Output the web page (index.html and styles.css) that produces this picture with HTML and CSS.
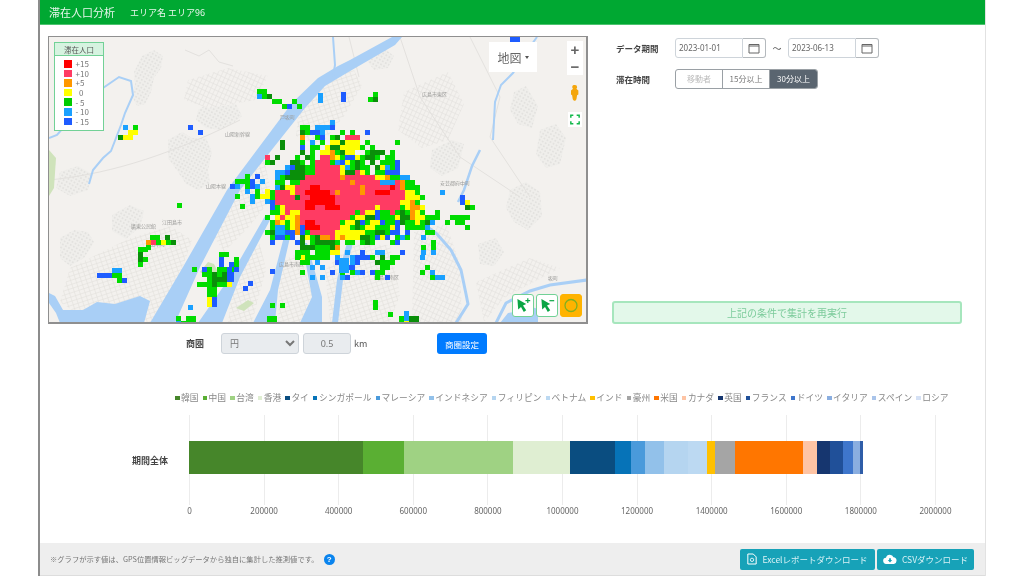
FILE: index.html
```html
<!DOCTYPE html>
<html lang="ja">
<head>
<meta charset="utf-8">
<title>滞在人口分析</title>
<link rel="stylesheet" href="styles.css">
</head>
<body>
<div class="page">
  <header class="header"><span class="title">滞在人口分析</span><span class="area">エリア名 エリア96</span></header>
  <main class="main">
    <div class="top">
      <section class="left">
        <div class="map">
          <svg class="basemap" viewBox="49 37 537 285" preserveAspectRatio="none" aria-hidden="true">
            <defs>
              <pattern id="streets" width="5" height="4" patternUnits="userSpaceOnUse" patternTransform="rotate(-18)">
                <rect width="5" height="4" fill="#f3f1ee"/>
                <path d="M0 .5H5M.5 0V4" stroke="#e2e0dc" stroke-width=".6"/>
              </pattern>
              <pattern id="streets2" width="4" height="5" patternUnits="userSpaceOnUse" patternTransform="rotate(25)">
                <rect width="4" height="5" fill="#f3f1ee"/>
                <path d="M0 .5H4M.5 0V5" stroke="#e3e1dd" stroke-width=".6"/>
              </pattern>
              <pattern id="hill" width="3.500" height="3.500" patternUnits="userSpaceOnUse" patternTransform="rotate(30)">
                <rect width="3.500" height="3.500" fill="#efeeeb"/>
                <circle cx="1.700" cy="1.700" r=".9" fill="#e0dfdc"/>
              </pattern>
            </defs>
            <rect x="49" y="37" width="537" height="285" fill="#f3f1ee"/>
            <g fill="url(#hill)">
              <path d="M134 72l8-16 12-6 9 6-2 12-7 10-3 14-6 12-8 2-5-10 3-12z"/>
              <path d="M168 140l14-8 10 6 14 0 6 14-4 18 2 14-12 6-12-6-8-12-10-14z"/>
              <path d="M198 110l12-8 14 4 12-2 6 12-10 8-12 6-14-2-10-8z"/>
              <path d="M60 172l18-6 14 8-4 16-18 6-14-8z"/>
              <path d="M60 238l14-8 14 2 6 10-10 16-14 8-10-8z"/>
              <path d="M112 215l18-10 14 6-4 16-14 12-14-8z"/>
              <path d="M432 150l20-10 12 4-6 24-16 8-12-8z"/>
              <path d="M510 190l16-8 14 10 2 24-14 14-14-8-8-14z"/>
              <path d="M514 92l12-6 12 20-6 22-14-4-8-14z"/>
              <path d="M478 244l18-6 8 14-10 14-14-2z"/>
              <path d="M540 130l16-6 10 14-6 26-14 4-10-14z"/>
              <path d="M372 52l12-4 10 8-6 12-14 2-6-8z"/>
            </g>
            <g fill="url(#streets)">
              <path d="M300 100l30-24 24-6 8 16-18 30-24 30-24-10z"/>
              <path d="M70 268l60-30 40-12 22 14-28 82H90l-30-20z"/>
              <path d="M240 180l24-22 8 40-24 30-24 24-12-18z"/>
              <path d="M236 262l24-18 6 26-14 52h-24z"/>
              <path d="M280 262l20-10 14 50 0 20h-36z"/>
              <path d="M325 270l25-25 40 0 10 50-10 27h-60z"/>
            </g>
            <g fill="url(#streets2)">
              <path d="M404 92l44-20 16 32-16 36-26 8-24-18z"/>
              <path d="M414 232l32-8 14 40 2 58h-50z"/>
              <path d="M476 282l54-24 30 10-56 30-20 24z"/>
              <path d="M188 80l40-12 40 8-12 24-48 8-24-8z"/>
            </g>
            <g fill="none" stroke="#e3e1de" stroke-width="1">
              <path d="M49 180C100 175 160 160 240 120"/>
              <path d="M185 50l14 6 10-6 10 12 14 4"/>
              <path d="M349 37l10 40M400 37l20 60 40 60 60 40"/>
              <path d="M470 37l30 60-10 40 40 60"/>
            </g>
            <path d="M208 262l6 2 4 8-12 4-6-4z" fill="#cfe3bb"/>
            <path d="M49 150l7 8-2 30-5 8z" fill="#cfe3bb"/>
            <path d="M236 308l12-8 6 3-10 8z" fill="#cfe3bb"/>
            <g fill="#a9cff6">
              <path d="M338 66L318 78 292 103 227 190 183 267 150 323H175L200 267 240 190 305 108 325 86 345 74 395 45 402 37H392L350 60z"/>
              <path d="M265 216L270 220 240 277 222 323H198L230 277z"/>
              <path d="M285 233H291L278 290 275 323H253L270 290z"/>
              <path d="M302 243H307L322 297 322 323H300L312 297z"/>
              <path d="M49 293l6 3 8 14 20 0 14-8 18 2 25-8 10 5-6 22H60l-4-10-7-10z"/>
              <path d="M500 323l8-10 12-2 6-6 12 4 0 14z"/>
            </g>
            <g fill="none" stroke="#a9cff6">
              <path stroke-width="2" d="M103 88l16-11 12 4 2 14-8 18-4 12-10 26-8 7-10 12-4 14"/>
              <path stroke-width="2" d="M49 138l8-3 6-7"/>
              <path stroke-width="2" d="M333 37l2 28-2 12"/>
              <path stroke-width="2" d="M537 37l-10 14-14 22-12 12-6 17-2 38"/>
              <path stroke-width="2.500" d="M480 150l-8 16-8 24-6 12"/>
              <path stroke-width="3" d="M421 222l16 12 14 16 10 20 5 24 2 10-12 19"/>
              <path stroke-width="3" d="M587 280l-37 5-20 6-24 12-10 20"/>
              <path stroke-width="6" d="M350 243l-10 37-5 43"/>
            </g>
            <g class="maplabel">
              <text x="131" y="228">廣東公民館</text>
              <text x="162" y="224">江田島市</text>
              <text x="150" y="246">山本町</text>
              <text x="225" y="136">山陽新幹線</text>
              <text x="280" y="119">戸坂町</text>
              <text x="422" y="96">広島市東区</text>
              <text x="206" y="188">山陽本線</text>
              <text x="440" y="185">安芸郡府中町</text>
              <text x="279" y="266">広島市南区</text>
              <text x="374" y="279">広島市南区</text>
              <text x="548" y="280">坂町</text>
              <text x="372" y="178">広島駅</text>
            </g>
            <g id="heat" shape-rendering="crispEdges"></g>
          </svg>
          <div class="legend">
            <div class="legend-head">滞在人口</div>
            <ul class="legend-list">
              <li><i class="sw s1"></i>+15</li>
              <li><i class="sw s2"></i>+10</li>
              <li><i class="sw s3"></i>+5</li>
              <li><i class="sw s4"></i>&nbsp;&nbsp;0</li>
              <li><i class="sw s5"></i>- 5</li>
              <li><i class="sw s6"></i>- 10</li>
              <li><i class="sw s7"></i>- 15</li>
            </ul>
          </div>
          <div class="maptype">地図<span class="caret"></span></div>
          <div class="zoomctl"><span>+</span><span>−</span></div>
          <svg class="pegman" viewBox="0 0 12 20" aria-hidden="true"><path fill="#f4a60c" d="M6 0a2.600 2.600 0 0 1 2.600 2.800c0 1-.4 1.600-1 2l2.600 2v5l-1.600 1-.8 5-1.400 2-1-.2-1-.2-1.200-1.600-.8-5-1.400-1V6.800l2.600-2c-.6-.4-1-1-1-2A2.600 2.600 0 0 1 6 0z"/></svg>
          <div class="fullscreen"><svg viewBox="0 0 12 12" aria-hidden="true"><path fill="none" stroke="#12b84a" stroke-width="1.800" d="M1 4V1h3M8 1h3v3M11 8v3H8M4 11H1V8"/></svg></div>
          <div class="tools">
            <button class="tool" type="button" aria-label="追加"><svg viewBox="0 0 20 20"><path fill="#0aa544" d="M3 2l11 6-4 2 4 6-3 2-3.500-6L4 15z"/><path stroke="#0aa544" stroke-width="1.500" d="M13 4h6M16 1v6"/></svg></button>
            <button class="tool" type="button" aria-label="削除"><svg viewBox="0 0 20 20"><path fill="#0aa544" d="M3 2l11 6-4 2 4 6-3 2-3.500-6L4 15z"/><path stroke="#0aa544" stroke-width="1.500" d="M13 4h6"/></svg></button>
            <button class="tool tool-on" type="button" aria-label="円"><svg viewBox="0 0 20 20"><circle cx="10" cy="10" r="7.500" fill="none" stroke="#7fb020" stroke-width="1.600"/></svg></button>
          </div>
        </div>
        <div class="area-row">
          <label class="b-label area-label">商圏</label>
          <select class="area-select"><option>円</option></select>
          <input class="area-input" value="0.5" disabled>
          <span class="unit">km</span>
          <button class="btn-primary" type="button">商圏設定</button>
        </div>
      </section>
      <section class="right">
        <div class="field">
          <span class="b-label">データ期間</span>
          <div class="date"><span class="date-val">2023-01-01</span><span class="cal"><svg viewBox="0 0 12 12"><path fill="none" stroke="#666" d="M1 2.500h10v8.500H1zM1 4h10"/></svg></span></div>
          <span class="tilde">〜</span>
          <div class="date"><span class="date-val">2023-06-13</span><span class="cal"><svg viewBox="0 0 12 12"><path fill="none" stroke="#666" d="M1 2.500h10v8.500H1zM1 4h10"/></svg></span></div>
        </div>
        <div class="field">
          <span class="b-label">滞在時間</span>
          <div class="seg">
            <span class="seg-item seg-muted">移動者</span>
            <span class="seg-item">15分以上</span>
            <span class="seg-item seg-on">30分以上</span>
          </div>
        </div>
        <button class="run" type="button">上記の条件で集計を再実行</button>
      </section>
    </div>
    <section class="chart">
      <ul class="chart-legend">
        <li><i class="c1"></i>韓国</li><li><i class="c2"></i>中国</li><li><i class="c3"></i>台湾</li><li><i class="c4"></i>香港</li><li><i class="c5"></i>タイ</li><li><i class="c6"></i>シンガポール</li><li><i class="c7"></i>マレーシア</li><li><i class="c8"></i>インドネシア</li><li><i class="c9"></i>フィリピン</li><li><i class="c10"></i>ベトナム</li><li><i class="c11"></i>インド</li><li><i class="c12"></i>豪州</li><li><i class="c13"></i>米国</li><li><i class="c14"></i>カナダ</li><li><i class="c15"></i>英国</li><li><i class="c16"></i>フランス</li><li><i class="c17"></i>ドイツ</li><li><i class="c18"></i>イタリア</li><li><i class="c19"></i>スペイン</li><li><i class="c20"></i>ロシア</li>
      </ul>
      <div class="plot-row">
        <span class="b-label row-label">期間全体</span>
        <div class="plot">
          <div class="gridlines"><i></i><i></i><i></i><i></i><i></i><i></i><i></i><i></i><i></i><i></i><i></i></div>
          <div class="bar">
            <span class="c1" style="width:174px"></span><span class="c2" style="width:41px"></span><span class="c3" style="width:109px"></span><span class="c4" style="width:57px"></span><span class="c5" style="width:45px"></span><span class="c6" style="width:16px"></span><span class="c7" style="width:14px"></span><span class="c8" style="width:19px"></span><span class="c9" style="width:24px"></span><span class="c10" style="width:19px"></span><span class="c11" style="width:8px"></span><span class="c12" style="width:20px"></span><span class="c13" style="width:68px"></span><span class="c14" style="width:14px"></span><span class="c15" style="width:13px"></span><span class="c16" style="width:13px"></span><span class="c17" style="width:10px"></span><span class="c18" style="width:7px"></span><span class="c21" style="width:3px"></span>
          </div>
        </div>
      </div>
      <div class="ticks"><span>0</span><span>200000</span><span>400000</span><span>600000</span><span>800000</span><span>1000000</span><span>1200000</span><span>1400000</span><span>1600000</span><span>1800000</span><span>2000000</span></div>
    </section>
    <footer class="footer">
      <p class="note">※グラフが示す値は、GPS位置情報ビッグデータから独自に集計した推測値です。<span class="help">?</span></p>
      <div class="actions">
        <button class="btn-info btn-excel" type="button"><svg viewBox="0 0 12 14"><path fill="none" stroke="#fff" stroke-width="1.200" d="M1 1h6.500L11 4.500V13H1z"/><circle cx="6" cy="8" r="2" fill="none" stroke="#fff"/></svg>Excelレポートダウンロード</button>
        <button class="btn-info btn-csv" type="button"><svg viewBox="0 0 16 12"><path fill="#fff" d="M4 11a3.500 3.500 0 0 1-.6-7A4.500 4.500 0 0 1 12 3.500 3.800 3.800 0 0 1 12.500 11z"/><path fill="#17a2b8" d="M8 9.500L5.500 6.500H7V4.500h2v2h1.500z"/></svg>CSVダウンロード</button>
      </div>
    </footer>
  </main>
</div>
<script src="heatmap.js"></script>
</body>
</html>
```
FILE: styles.css
```css
* { box-sizing: border-box; }
html, body { margin: 0; padding: 0; background: #fff; }
body {
  width: 1024px;
  height: 576px;
  overflow: hidden;
  font-family: "Noto Sans CJK JP", "Noto Sans", "Liberation Sans", sans-serif;
  color: #444;
}
.page {
  margin-left: 38px;
  width: 948px;
  height: 576px;
  display: flex;
  flex-direction: column;
  background: #fff;
  border-left: 2px solid #8c8c8c;
  border-right: 1px solid #e2e2e2;
  filter: blur(.5px);
}
.header {
  height: 25px;
  flex: none;
  background: #00a832;
  border-bottom: 1px solid #4cc36f;
  color: #e8f6ec;
  display: flex;
  align-items: center;
  padding-left: 9px;
}
.title { font-size: 11px; margin-right: 15px; }
.area { font-size: 9px; }
.main { flex: 1; display: flex; flex-direction: column; min-height: 0; }
.top { display: flex; padding: 11px 0 0 8px; }
.left { width: 540px; flex: none; }
.map {
  position: relative;
  height: 288px;
  border: 1px solid #8f8f8f;
  border-width: 1px 2px 2px 1px;
  overflow: hidden;
  background: #f3f1ee;
}
.basemap { position: absolute; inset: 0; width: 100%; height: 100%; display: block; }
.maplabel { font-size: 5px; fill: #9a9a98; }
.legend {
  position: absolute;
  left: 5px;
  top: 5px;
  width: 50px;
  height: 89px;
  background: #fff;
  border: 1px solid #72d196;
}
.legend-head {
  height: 13px;
  background: #d6f3e0;
  font-size: 7.500px;
  line-height: 13px;
  text-align: center;
  color: #555;
  border-bottom: 1px solid #72d196;
}
.legend-list {
  list-style: none;
  margin: 0;
  padding: 3px 0 0 9px;
  font-size: 8px;
  color: #777;
}
.legend-list li { height: 9.600px; display: flex; align-items: center; gap: 4px; line-height: 9px; }
.sw { width: 7.500px; height: 7.500px; display: block; }
.s1 { background: #ff0000; }
.s2 { background: #ff3b63; }
.s3 { background: #ff9800; }
.s4 { background: #ffff00; }
.s5 { background: #00cc00; }
.s6 { background: #1aa0ff; }
.s7 { background: #1e5cff; }
.maptype {
  position: absolute;
  right: 49px;
  top: 5px;
  width: 48px;
  height: 30px;
  background: #fff;
  font-size: 12px;
  color: #666;
  display: flex;
  align-items: center;
  justify-content: center;
  gap: 3px;
}
.caret { width: 0; height: 0; border: 2.500px solid transparent; border-top: 3px solid #555; border-bottom: 0; }
.zoomctl {
  position: absolute;
  right: 3px;
  top: 4px;
  width: 16px;
  height: 34px;
  display: flex;
  flex-direction: column;
  align-items: center;
  color: #666;
  font-size: 15px;
  font-weight: 700;
  line-height: 17px;
  background: #fff;
  font-family: "Liberation Sans", sans-serif;
}
.zoomctl span { height: 17px; }
.pegman { position: absolute; right: 6px; top: 48px; width: 10px; height: 16px; }
.fullscreen {
  position: absolute;
  right: 4px;
  top: 75px;
  width: 14px;
  height: 15px;
  background: #fff;
  padding: 2px;
  display: flex;
}
.fullscreen svg { width: 100%; height: 100%; }
.tools { position: absolute; right: 4px; bottom: 5px; display: flex; gap: 2px; }
.tool {
  width: 22px;
  height: 23px;
  padding: 2px;
  background: #fff;
  border: 1.500px solid #72d196;
  border-radius: 3px;
  display: flex;
}
.tool svg { width: 100%; height: 100%; }
.tool-on { background: #ffb300; border-color: #ffb300; }
.area-row { display: flex; align-items: center; margin-top: 9px; height: 21px; padding-left: 138px; }
.b-label { font-size: 9px; font-weight: 700; color: #444; }
.area-label { width: 35px; }
.area-select {
  width: 78px;
  height: 21px;
  background: #e9ecef;
  border: 1px solid #ced4da;
  border-radius: 3px;
  font: 9px "Noto Sans CJK JP", sans-serif;
  color: #777;
  padding-left: 4px;
}
.area-input {
  width: 48px;
  height: 21px;
  margin-left: 4px;
  background: #e9ecef;
  border: 1px solid #ced4da;
  border-radius: 3px;
  text-align: center;
  font: 9px "Noto Sans", sans-serif;
  color: #777;
}
.unit { font-size: 9px; color: #555; margin-left: 3px; width: 83px; }
.btn-primary {
  width: 50px;
  height: 21px;
  background: #007bff;
  color: #fff;
  border: 0;
  border-radius: 3px;
  padding: 0;
  font: 8.500px "Noto Sans CJK JP", sans-serif;
}
.right { margin-left: 24px; width: 350px; display: flex; flex-direction: column; height: 288px; }
.field { display: flex; align-items: center; height: 20px; margin-left: 4px; margin-top: 2px; }
.field + .field { margin-top: 11px; }
.field .b-label { width: 59px; font-size: 8.500px; }
.date { display: flex; height: 20px; width: 91px; }
.date-val {
  width: 68px;
  border: 1px solid #ced4da;
  border-radius: 3px 0 0 3px;
  font: 8px/18px "Noto Sans", sans-serif;
  color: #666;
  padding-left: 3px;
}
.cal {
  width: 23px;
  border: 1px solid #b4b9bd;
  border-radius: 0 3px 3px 0;
  border-left: 0;
  display: flex;
  align-items: center;
  justify-content: center;
}
.cal svg { width: 12px; height: 12px; }
.tilde { width: 22px; text-align: center; font-size: 9px; color: #555; }
.seg { display: flex; height: 20px; border: 1px solid #9aa0a5; border-radius: 3px; overflow: hidden; }
.seg-item {
  width: 47px;
  font-size: 8px;
  line-height: 18px;
  text-align: center;
  color: #777;
  border-right: 1px solid #9aa0a5;
}
.seg-muted { color: #bbb; }
.seg-on { background: #5a6570; color: #fff; border-right: 0; }
.run {
  margin-top: auto;
  height: 23px;
  background: #e3f8ea;
  border: 2px solid #a6e6bd;
  border-radius: 3px;
  color: #7ccb9b;
  font: 10px "Noto Sans CJK JP", sans-serif;
  padding: 0;
}
.chart { margin-top: 38px; }
.chart-legend {
  list-style: none;
  margin: 0 0 0 135px;
  padding: 0;
  height: 12px;
  display: flex;
  gap: 4.100px;
  font-size: 8.750px;
  line-height: 12px;
  color: #888;
  white-space: nowrap;
}
.chart-legend li { display: flex; align-items: center; gap: 1.500px; }
.chart-legend i { display: block; width: 4.500px; height: 4.500px; }
.plot-row { display: flex; align-items: center; margin-top: 11px; padding-left: 92px; }
.row-label { width: 57px; }
.plot { position: relative; width: 747px; height: 90px; }
.gridlines { position: absolute; inset: 0; display: flex; justify-content: space-between; }
.gridlines i { display: block; width: 1px; background: #ececec; }
.bar { position: absolute; left: 0; top: 26px; height: 33px; display: flex; }
.bar span { display: block; height: 100%; }
.ticks {
  display: flex;
  justify-content: space-between;
  margin: 1px 0 0 149px;
  width: 747px;
  font: 8px/10px "Noto Sans", sans-serif;
  color: #666;
}
.ticks span { width: 1px; display: flex; justify-content: center; white-space: nowrap; }
.c1 { background: #46862a; }
.c2 { background: #5aaf33; }
.c3 { background: #9fd283; }
.c4 { background: #dfeed2; }
.c5 { background: #0a4d80; }
.c6 { background: #0673b8; }
.c7 { background: #4a9adb; }
.c8 { background: #92c1ea; }
.c9 { background: #b5d5f0; }
.c10 { background: #bcd9f2; }
.c11 { background: #ffc000; }
.c12 { background: #a5a5a5; }
.c13 { background: #ff7600; }
.c14 { background: #fec4a4; }
.c15 { background: #16366f; }
.c16 { background: #205099; }
.c17 { background: #3e76cc; }
.c18 { background: #8aaee0; }
.c19 { background: #a9c4ea; }
.c20 { background: #d5e1f5; }
.c21 { background: #2f5da8; }
.footer {
  margin-top: auto;
  height: 33px;
  background: #eeeeee;
  display: flex;
  align-items: center;
  justify-content: space-between;
  padding: 0 11px 0 10px;
  border-bottom: 1px solid #ddd;
}
.note { margin: 0; font-size: 7.300px; color: #777; display: flex; align-items: center; gap: 5px; }
.help {
  width: 11px;
  height: 11px;
  border-radius: 50%;
  background: #0a84ee;
  color: #fff;
  font: 700 8px/11px "Liberation Sans", sans-serif;
  text-align: center;
}
.actions { display: flex; gap: 2px; }
.btn-info {
  height: 21px;
  background: #17a2b8;
  color: #d9f2f6;
  border: 0;
  border-radius: 2px;
  font: 8.500px "Noto Sans CJK JP", sans-serif;
  display: flex;
  align-items: center;
  justify-content: center;
  gap: 5px;
  padding: 0;
}
.btn-excel { width: 135px; }
.btn-excel svg { width: 10px; height: 12px; }
.btn-csv { width: 97px; }
.btn-csv svg { width: 14px; height: 11px; }
```
FILE: heatmap.js
```js
// Population-change mesh: 5px cells, one block per cluster: [page x, page y, rows]
var COLORS = { r: '#ff0000', p: '#ff3b63', o: '#ff9800', y: '#ffff00', g: '#00dc00', d: '#0a8f0a', c: '#1aa0ff', b: '#1e5cff' };
var CLUSTERS = [
  [265, 120, [
    '.............c',
    '.......gg.cccb',
    '.......dgbbc...g.g..b',
    '.......o..gb.gd.ppp',
    '...d...g.c.g.yydyyy.g.....g',
    '...d...b.gg.yddyyyyg.g',
    '.......d.g.yyogdyy..gddd.g',
    'p.d...g.dg.ppoygbbygddg.gg',
    'gd...ddg.gpppgcbygdg.d.gggb',
    '....cbddggpppppycgdgg.dycgb',
    '..ccbdddggpppppyddpyg.ggbbb',
    '..cgddddpppppppoppppppyyoggcc',
    '..gg.ggppppppppppopppppcccpogg',
    '..cdyyppprrppppppppoppppprpoggg',
    '.gpppypprrrrrpoppppopprrrpppyyg....c',
    '.gppppdpprrrrrppppppppppppppyyyg.......b',
    '.bpppppprrrrrrpppppppppppppyyog........by',
    '.bgypppprrpprrrpppppppyppppgyooy........dg',
    '.ggypyypppppppppppgpyybggpgdgoyg..g.....',
    'g.ypyyoppppppppppgyyddbgggyddoyyggg..gggg',
    '.goygyoprrpppppgyydbgyybggbdggygdc..g.gg',
    '.gccgyobrrrppppyygdgyygggyb.ggggc.......g',
    'gdccbbobgpppppyyyyyyggddgbb.b...gg',
    '.gbbgb.bygdoopyoyyyddgbyb.gcg..',
    '.b....b..gddddg.gg.gdg...gb.',
    '.......gddgggdo.',
    '......ggg.gggyy.c..b..cc...b',
    '......gyggggg.c..cbbbg.d.gg....c',
    '.......gg.c...b..cb...dggg',
    '.........c.c...cbb.....gg.......g',
    '.......g.....b.g.gcb.bgg.......g.c',
    '.........c.c...cb.....g.b........gcc'
  ]],
  [257, 89, ['gg', 'cgd', '...gg..g', '.....gb.g']],
  [318, 93, ['c', 'c']],
  [341, 92, ['b', 'b']],
  [368, 92, ['.g', 'gd']],
  [505, 37, ['.bb', 'b..b']],
  [118, 125, ['.c.g', '..yy', 'dyy']],
  [188, 125, ['b', '..b']],
  [230, 174, ['...g.b', '.gggb.c', 'bc.gbc', '...c.g.y', '.g..cgyy', '....c..c', '..g.']],
  [177, 203, ['g']],
  [150, 235, ['gg.d', 'gg.d']],
  [146, 240, ['opgygd', 'g']],
  [138, 247, ['gg', 'd', 'dg', 'g']],
  [97, 268, ['...cc', 'bbbgg', '....gb']],
  [219, 252, ['gg', 'b..g', 'b.bg', 'b.gb', '.gb', '.bb']],
  [192, 267, ['g.bg.ggb', '..ggdgdb', '...gdddb', '.gggdggy', '...gg', '...gg', '...yb', '...yb']],
  [183, 305, ['.c']],
  [270, 269, ['b']],
  [243, 281, ['.b', 'b']],
  [270, 303, ['g.g']],
  [267, 316, ['gg', 'gg']],
  [176, 316, ['g.gg', 'cggg']],
  [300, 235, ['d', 'd', 'd']],
  [296, 254, ['g']],
  [339, 258, ['cc', 'cc', 'cc']],
  [373, 300, ['g', 'g']],
  [388, 312, ['g']],
  [404, 311, ['c']],
  [399, 316, ['gcdd', 'gydd']],
  [421, 235, ['c', '..g', 'g.g', 'c.c']]
];
(function () {
  var layer = document.getElementById('heat');
  var NS = 'http://www.w3.org/2000/svg';
  CLUSTERS.forEach(function (cluster) {
    cluster[2].forEach(function (row, r) {
      row.split('').forEach(function (ch, c) {
        if (!COLORS[ch]) return;
        var cell = document.createElementNS(NS, 'rect');
        cell.setAttribute('x', cluster[0] + c * 5);
        cell.setAttribute('y', cluster[1] + r * 5);
        cell.setAttribute('width', 5);
        cell.setAttribute('height', 5);
        cell.setAttribute('fill', COLORS[ch]);
        layer.appendChild(cell);
      });
    });
  });
})();
```
